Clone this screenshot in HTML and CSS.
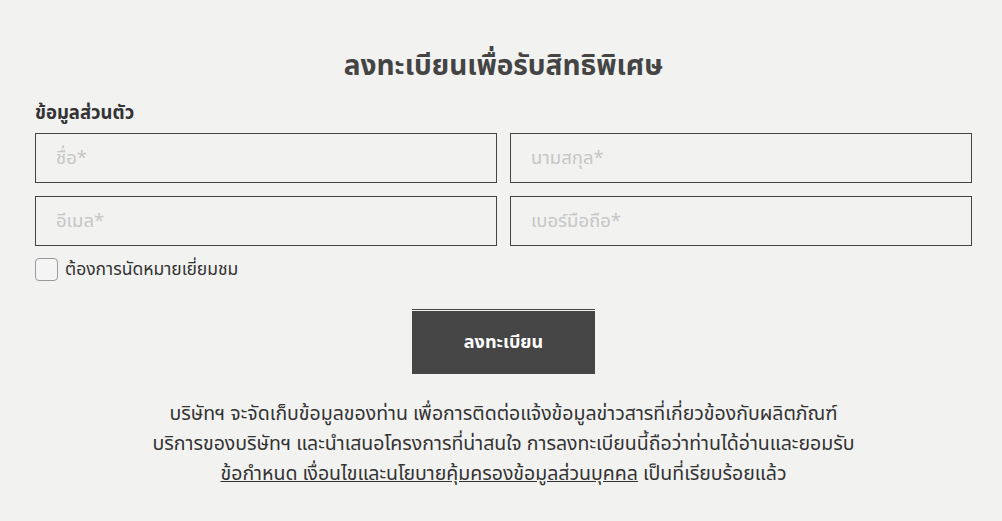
FILE: index.html
```html
<!DOCTYPE html>
<html lang="th">
<head>
<meta charset="utf-8">
<link rel="stylesheet" href="styles.css">
</head>
<body>
<main class="page">
  <h1 class="title">ลงทะเบียนเพื่อรับสิทธิพิเศษ</h1>
  <h2 class="section">ข้อมูลส่วนตัว</h2>
  <div class="grid">
    <div class="field">ชื่อ*</div>
    <div class="field">นามสกุล*</div>
    <div class="field">อีเมล*</div>
    <div class="field">เบอร์มือถือ*</div>
  </div>
  <label class="check"><span class="box"></span><span>ต้องการนัดหมายเยี่ยมชม</span></label>
  <div class="actions"><button class="btn">ลงทะเบียน</button></div>
  <p class="note">บริษัทฯ จะจัดเก็บข้อมูลของท่าน เพื่อการติดต่อแจ้งข้อมูลข่าวสารที่เกี่ยวข้องกับผลิตภัณฑ์<br>บริการของบริษัทฯ และนำเสนอโครงการที่น่าสนใจ การลงทะเบียนนี้ถือว่าท่านได้อ่านและยอมรับ<br><a class="link">ข้อกำหนด เงื่อนไขและนโยบายคุ้มครองข้อมูลส่วนบุคคล</a> เป็นที่เรียบร้อยแล้ว</p>
</main>
</body>
</html>
```
FILE: styles.css
```css
html, body { margin: 0; padding: 0; }
body {
  background: #f2f2f1;
  font-family: "Noto Sans Thai", "Noto Sans", "DejaVu Sans", sans-serif;
  color: #444;
  width: 1002px;
  height: 521px;
  overflow: hidden;
}
.page { padding: 47px 30px 0 35px; }
.title {
  margin: 0;
  text-align: center;
  font-size: 28px;
  font-weight: 700;
  line-height: 40px;
  color: #444;
}
.section {
  margin: 14px 0 8px;
  font-size: 18.5px;
  font-weight: 700;
  line-height: 24px;
  color: #333;
}
.grid {
  display: grid;
  grid-template-columns: 462px 462px;
  column-gap: 13px;
  row-gap: 13px;
}
.field {
  box-sizing: border-box;
  height: 50px;
  border: 1px solid #444;
  padding: 0 0 0 20px;
  display: flex;
  align-items: center;
  font-size: 18.5px;
  color: #c6c6c6;
}
.check {
  display: flex;
  align-items: center;
  gap: 7px;
  margin-top: 12px;
  font-size: 17.5px;
  line-height: 23px;
  color: #333;
}
.box {
  width: 23px; height: 23px;
  box-sizing: border-box;
  border: 1px solid #999;
  border-radius: 4px;
  background: #f4f4f4;
}
.actions { display: flex; justify-content: center; margin-top: 28px; }
.btn {
  width: 183px;
  height: 65px;
  background: #454545;
  border: none;
  border-top: 1px solid #454545;
  box-shadow: inset 0 1px 0 #f2f2f1;
  color: #fff;
  font-family: inherit;
  font-size: 18px;
  font-weight: 700;
  padding: 0;
}
.note {
  margin: 25px 0 0;
  text-align: center;
  font-size: 19.5px;
  line-height: 30px;
  color: #333;
}
.link { text-decoration: underline; color: #333; }
```
